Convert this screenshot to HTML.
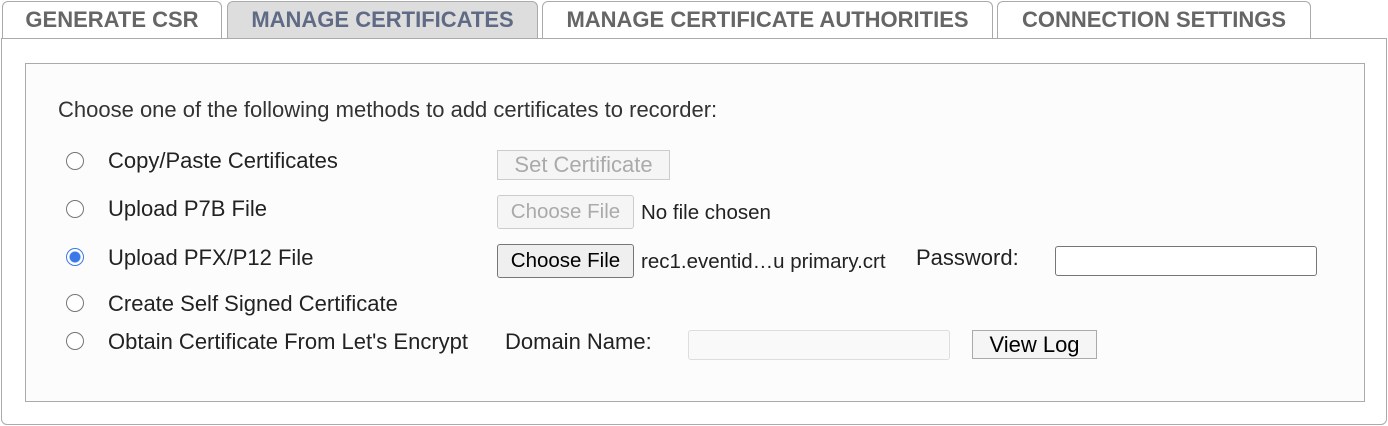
<!DOCTYPE html>
<html><head><style>
body{margin:0;width:1388px;height:426px;background:#fff;font-family:"Liberation Sans",Arial,sans-serif;position:relative;overflow:hidden}
.a{position:absolute}
.tab{position:absolute;top:1px;height:37px;border:1px solid #aaa;border-bottom:none;border-radius:6px 6px 0 0;background:#fff;color:#666;font-weight:bold;font-size:22px;line-height:36px;text-align:center;box-sizing:border-box;white-space:nowrap}
.t{position:absolute;font-size:22px;color:#222;line-height:24px;white-space:nowrap}
.r{position:absolute;left:66px;width:18px;height:18px;border:1.5px solid #767676;border-radius:50%;box-sizing:border-box;background:#fff}
.b{position:absolute;box-sizing:border-box;font-size:22px;text-align:center;border:1px solid #ccc;background:#f5f5f5;color:#aaa;white-space:nowrap}
</style></head><body>
<div class="tab" style="left:2px;width:220px">GENERATE CSR</div>
<div class="tab" style="left:227px;width:311px;background:#ddd;color:#5f6b85;height:38px">MANAGE CERTIFICATES</div>
<div class="tab" style="left:542px;width:451px">MANAGE CERTIFICATE AUTHORITIES</div>
<div class="tab" style="left:997px;width:314px">CONNECTION SETTINGS</div>
<div class="a" style="left:1px;top:38px;width:1386px;height:387px;border:1px solid #aaa;border-radius:0 0 6px 6px;box-sizing:border-box"></div>
<div class="a" style="left:25px;top:63px;width:1340px;height:339px;border:1px solid #aaa;background:#fcfcfc;box-sizing:border-box"></div>
<div class="t" style="left:58px;top:98px;color:#333">Choose one of the following methods to add certificates to recorder:</div>
<div class="r" style="top:152px"></div>
<div class="r" style="top:200px"></div>
<div class="r" style="top:248px;border:1.5px solid #3b78e7;background:radial-gradient(circle,#3b78e7 5px,#fff 6px)"></div>
<div class="r" style="top:294px"></div>
<div class="r" style="top:332px"></div>
<div class="t" style="left:108px;top:149px">Copy/Paste Certificates</div>
<div class="t" style="left:108px;top:197px">Upload P7B File</div>
<div class="t" style="left:108px;top:246px">Upload PFX/P12 File</div>
<div class="t" style="left:108px;top:292px">Create Self Signed Certificate</div>
<div class="t" style="left:108px;top:330px">Obtain Certificate From Let's Encrypt</div>
<div class="b" style="left:497px;top:150px;width:173px;height:30px;line-height:28px">Set Certificate</div>
<div class="b" style="left:497px;top:195px;width:137px;height:34px;line-height:32px;border-radius:3px;font-size:20.5px">Choose File</div>
<div class="t" style="left:641px;top:201px;font-size:20.5px">No file chosen</div>
<div class="b" style="left:497px;top:244px;width:137px;height:34px;line-height:32px;border-radius:3px;border-color:#767676;background:#efefef;color:#000;font-size:20.5px">Choose File</div>
<div class="t" style="left:641px;top:250px;font-size:20.5px">rec1.eventid…u primary.crt</div>
<div class="t" style="left:916px;top:246px">Password:</div>
<div class="a" style="left:1055px;top:246px;width:262px;height:30px;border:1px solid #767676;border-radius:3px;box-sizing:border-box;background:#fff"></div>
<div class="t" style="left:505px;top:330px">Domain Name:</div>
<div class="a" style="left:688px;top:330px;width:262px;height:30px;border:1px solid #ddd;border-radius:3px;box-sizing:border-box;background:#f9f9f9"></div>
<div class="b" style="left:972px;top:330px;width:125px;height:29px;line-height:28px;color:#000;border-color:#aaa">View Log</div>
</body></html>
